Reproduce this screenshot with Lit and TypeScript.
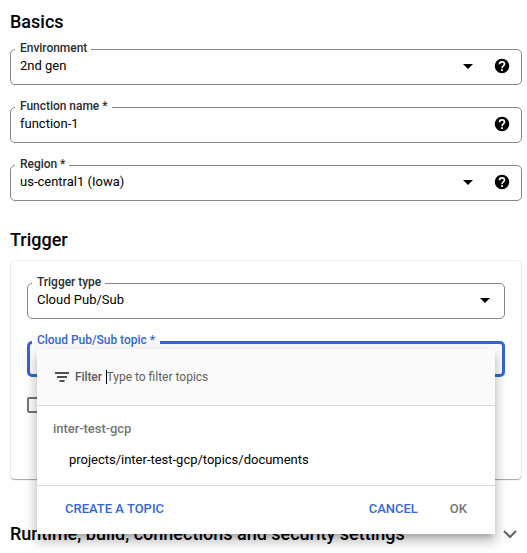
import { LitElement, html, css, svg, nothing } from "lit";
import { customElement, property } from "lit/decorators.js";

const helpIcon = html`<svg class="help" viewBox="0 0 24 24" width="18" height="18">
  ${svg`<path fill="#000" stroke="none" d="M12 2.4C6.7 2.4 2.4 6.7 2.4 12s4.3 9.6 9.6 9.6 9.6-4.3 9.6-9.6S17.3 2.4 12 2.4z"/>
  <path fill="none" stroke="#fff" stroke-width="2.2" d="M8.7 9.7c0-2 1.5-3.3 3.3-3.3s3.3 1.2 3.3 3c0 2.5-3.3 2.7-3.3 5.5"/>
  <path fill="#fff" d="M10.8 16.3h2.4v2.4h-2.4z"/>`}
</svg>`;

@customElement("outlined-field")
export class OutlinedField extends LitElement {
  @property() label = "";
  @property() value = "";
  @property({ type: Boolean }) dropdown = false;
  @property({ type: Boolean }) help = false;
  @property({ type: Boolean, reflect: true }) active = false;

  static styles = css`
    :host {
      display: flex;
      align-items: center;
      position: relative;
      box-sizing: border-box;
      height: 36px;
      border: 1px solid #80868b;
      border-radius: 5px;
      padding: 0 11px 2px 9px;
      font-size: 13px;
      color: #000;
    }
    :host([active]) {
      border: 3px solid #3367d6;
    }
    .label {
      position: absolute;
      left: 4px;
      top: -9px;
      padding: 0 4px 0 5px;
      background: #fff;
      font-size: 12px;
      font-weight: 500;
      line-height: 14px;
      letter-spacing: -0.03px;
      color: #2c2d30;
      white-space: nowrap;
    }
    :host([active]) .label {
      left: 2px;
      top: -11px;
      padding-right: 5px;
      color: #3367d6;
    }
    .value {
      flex: 1;
      line-height: 16px;
    }
    .arrow {
      width: 10px;
      height: 5px;
      margin: 1px 3px 0 0;
    }
    .help {
      margin-left: 17px;
      margin-right: -1px;
    }
  `;

  render() {
    return html`
      <span class="label">${this.label}</span>
      <span class="value">${this.value}</span>
      ${this.dropdown
        ? html`<svg class="arrow" viewBox="0 0 10 5"><path d="M0 0h10L5 5z" /></svg>`
        : nothing}
      ${this.help ? helpIcon : nothing}
    `;
  }
}

@customElement("topic-menu")
export class TopicMenu extends LitElement {
  static styles = css`
    :host {
      display: flex;
      flex-direction: column;
      box-sizing: border-box;
      width: 458px;
      height: 185px;
      background: #fff;
      font-size: 13px;
      box-shadow: 0 5px 5px -3px rgba(0, 0, 0, 0.2), 0 8px 10px 1px rgba(0, 0, 0, 0.14),
        0 3px 14px 2px rgba(0, 0, 0, 0.12);
    }
    .filter {
      display: flex;
      align-items: center;
      box-sizing: border-box;
      height: 57px;
      padding-left: 18px;
      background: #fafafa;
      border-bottom: 1px solid #dadada;
      font-size: 12px;
      color: #5f5f5f;
    }
    .filter svg {
      margin-right: 6px;
    }
    .name {
      font-weight: 500;
      width: 31px;
      letter-spacing: -0.1px;
      color: #5a5a5a;
    }
    .caret {
      width: 1px;
      height: 14px;
      background: #000;
    }
    .hint {
      margin-left: -0.5px;
    }
    .list {
      flex: 1;
      padding: 15px 16px 0;
    }
    .group {
      font-weight: 500;
      line-height: 16px;
      letter-spacing: -0.05px;
      color: #757575;
    }
    .option {
      margin-top: 15px;
      padding-left: 16px;
      line-height: 16px;
      letter-spacing: -0.01px;
      color: #000;
    }
    .actions {
      display: flex;
      align-items: center;
      box-sizing: border-box;
      height: 49px;
      padding: 0 28px 3px;
      border-top: 1px solid #dadada;
      font-weight: 500;
      color: #3367d6;
    }
    .cancel {
      margin-left: auto;
    }
    .ok {
      margin-left: 32px;
      color: #757575;
    }
  `;

  render() {
    return html`
      <div class="filter">
        <svg width="14" height="10" viewBox="0 0 14 10" fill="#4f4f4f">
          <path d="M0 0h14v2H0zM2 4h10v2H2zM4.5 8h5v2h-5z" />
        </svg>
        <span class="name">Filter</span>
        <span class="caret"></span>
        <span class="hint">Type to filter topics</span>
      </div>
      <div class="list">
        <div class="group">inter-test-gcp</div>
        <div class="option">projects/inter-test-gcp/topics/documents</div>
      </div>
      <div class="actions">
        <span class="create">CREATE A TOPIC</span>
        <span class="cancel">CANCEL</span>
        <span class="ok">OK</span>
      </div>
    `;
  }
}

@customElement("app-root")
export class AppRoot extends LitElement {
  static styles = css`
    :host {
      display: block;
      box-sizing: border-box;
      width: 527px;
      height: 553px;
      padding: 11px 5px 0 10px;
      overflow: hidden;
      background: #fff;
      font-family: Roboto, "Liberation Sans", sans-serif;
      color: #000;
    }
    h2 {
      margin: 0;
      font-size: 18px;
      line-height: 22px;
      font-weight: 500;
    }
    .fields {
      display: flex;
      flex-direction: column;
      gap: 22px;
      width: 512px;
      margin: 16px 0 28px;
    }
    .card {
      display: flex;
      flex-direction: column;
      gap: 22px;
      box-sizing: border-box;
      width: 510px;
      height: 218px;
      margin: 10px 0 44px 1px;
      padding: 22px 16px 0;
      border-radius: 4px;
      box-shadow: 0 1px 1px rgba(0, 0, 0, 0.32), 0 0 2px rgba(0, 0, 0, 0.2);
    }
    .anchor {
      position: relative;
    }
    topic-menu {
      position: absolute;
      left: 10px;
      top: 8px;
    }
    .checkbox {
      box-sizing: border-box;
      width: 16px;
      height: 16px;
      margin-top: -2px;
      border: 2px solid #757575;
      border-radius: 2px;
    }
    .more {
      display: flex;
      align-items: center;
      justify-content: space-between;
    }
    .more svg {
      margin: 1px 5px 0 0;
    }
  `;

  render() {
    return html`
      <h2>Basics</h2>
      <div class="fields">
        <outlined-field label="Environment" value="2nd gen" dropdown help></outlined-field>
        <outlined-field label="Function name *" value="function-1" help></outlined-field>
        <outlined-field label="Region *" value="us-central1 (Iowa)" dropdown help></outlined-field>
      </div>
      <h2>Trigger</h2>
      <div class="card">
        <outlined-field label="Trigger type" value="Cloud Pub/Sub" dropdown></outlined-field>
        <div class="anchor">
          <outlined-field label="Cloud Pub/Sub topic *" active></outlined-field>
          <topic-menu></topic-menu>
        </div>
        <div class="checkbox"></div>
      </div>
      <div class="more">
        <h2>Runtime, build, connections and security settings</h2>
        <svg width="14" height="9" viewBox="0 0 14 9" fill="none" stroke="#5f6368" stroke-width="2">
          <path d="M1 1l6 6 6-6" />
        </svg>
      </div>
    `;
  }
}
